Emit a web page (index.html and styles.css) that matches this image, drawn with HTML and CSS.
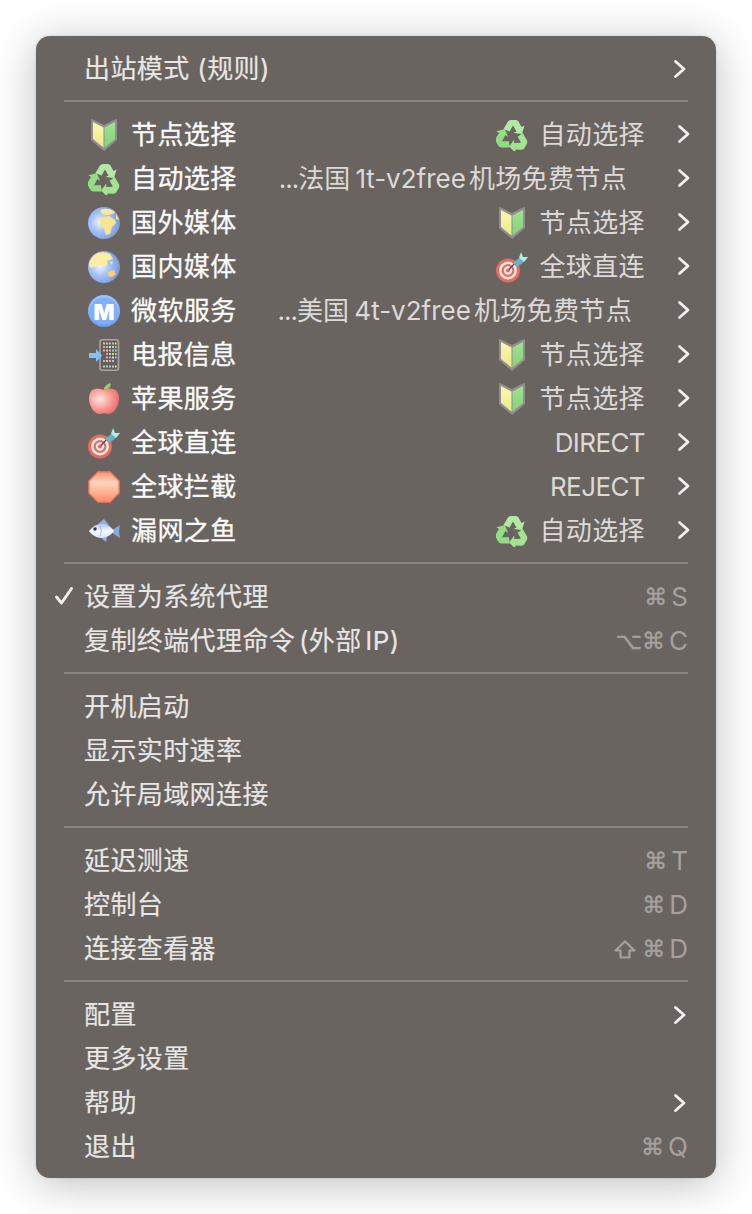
FILE: index.html
```html
<!DOCTYPE html>
<html lang="zh">
<head>
<meta charset="utf-8">
<title>Menu</title>
<link rel="stylesheet" href="styles.css">
</head>
<body>
<svg class="defs" aria-hidden="true">
  <defs>
    <radialGradient id="gGlobe" cx="38%" cy="48%" r="62%"><stop offset="0" stop-color="#f2f6ff"/><stop offset=".45" stop-color="#a9c4fb"/><stop offset=".85" stop-color="#82a6f0"/><stop offset="1" stop-color="#8d93a8"/></radialGradient>
    <linearGradient id="gM" x1="0" y1="0" x2="0" y2="1"><stop offset="0" stop-color="#9cc6fc"/><stop offset="1" stop-color="#6f9ff0"/></linearGradient>
    <radialGradient id="gApple" cx="36%" cy="42%" r="68%"><stop offset="0" stop-color="#ffe6e2"/><stop offset=".5" stop-color="#fba39d"/><stop offset="1" stop-color="#ea6a66"/></radialGradient>
    <linearGradient id="gStop" x1="0" y1="0" x2="0" y2="1"><stop offset="0" stop-color="#ff8f70"/><stop offset=".35" stop-color="#ffd5bc"/><stop offset="1" stop-color="#ff8a68"/></linearGradient>
    <linearGradient id="gFish" x1="0" y1="0" x2="0" y2="1"><stop offset="0" stop-color="#a9c6ef"/><stop offset=".5" stop-color="#f6faff"/><stop offset="1" stop-color="#d9e7fa"/></linearGradient>
    <linearGradient id="gShieldL" x1="0" y1="0" x2="0" y2="1"><stop offset="0" stop-color="#fbf7ae"/><stop offset="1" stop-color="#efe88c"/></linearGradient>
    <linearGradient id="gShieldR" x1="0" y1="0" x2="0" y2="1"><stop offset="0" stop-color="#9fe28f"/><stop offset="1" stop-color="#86d27a"/></linearGradient>
    <path id="rArrow" d="M7.500 10 L12 2.500 Q13 1 15 1 H20 Q21.500 1 22.500 2.500 L25.500 8 L28.500 6.500 L26 15 L17.500 14 L20.500 12.500 L17 6.500 L13.500 12.500Z"/>
    <symbol id="i-shield" viewBox="0 0 32 32">
      <path d="M4 0 L16 6 L28 0 Q29 0 29 2 V21 L16 32 L3 21 V2 Q3 0 4 0Z" fill="#938e90"/>
      <path d="M5 3 L15.500 8.500 V28.500 L5 20Z" fill="url(#gShieldL)"/>
      <path d="M27 3 L16.500 8.500 V28.500 L27 20Z" fill="url(#gShieldR)"/>
    </symbol>
    <symbol id="i-recycle" viewBox="0 0 32 32">
      <use href="#rArrow" fill="#b4e8a6"/>
      <use href="#rArrow" fill="#a2e392" transform="rotate(120 16 17.500)"/>
      <use href="#rArrow" fill="#92dd83" transform="rotate(240 16 17.500)"/>
    </symbol>
    <symbol id="i-globe1" viewBox="0 0 32 32">
      <circle cx="16" cy="16" r="16" fill="url(#gGlobe)"/>
      <path d="M12 3 Q19 0 26 4 L27 6 L21 8 L17 8 L14 7Z" fill="#f9e994"/>
      <path d="M12 11 L21 9 L27 13 L28 16 L24 20 L22 27 L18 28 L16 21 L12 18Z" fill="#f7e58f"/>
      <path d="M28 7 L31 13 L28 12Z" fill="#f7e58f"/>
    </symbol>
    <symbol id="i-globe2" viewBox="0 0 32 32">
      <circle cx="16" cy="16" r="16" fill="url(#gGlobe)"/>
      <path d="M1 13 Q3 5 10 2 Q17 0 22 3 L25 8 L19 10 L19 14 L15 16 L12 13 L9 15 L5 16 L2 17Z" fill="#fbeea0"/>
      <path d="M20 21 L26 19 L28 23 L24 26 L20 25Z" fill="#f5cf72"/>
      <path d="M22 11 L25 10 L24 14Z" fill="#f7e58f"/>
    </symbol>
    <symbol id="i-m" viewBox="0 0 32 32">
      <circle cx="16" cy="16" r="16" fill="url(#gM)"/>
      <circle cx="16" cy="16" r="13.500" fill="#7fb0f8"/>
      <text class="m-letter" x="16" y="24.500" text-anchor="middle">M</text>
    </symbol>
    <symbol id="i-phone" viewBox="0 0 32 32">
      <rect x="12" y=".8" width="18.500" height="30.400" rx="2.500" fill="#625e5d" stroke="#a8a4a2" stroke-width="1.600"/>
      <g fill="#c9d8a8"><rect x="15" y="3.500" width="2" height="2"/><rect x="18" y="3.500" width="2" height="2" fill="#f4c86a"/><rect x="21" y="3.500" width="2" height="2" fill="#9cc8f5"/><rect x="24" y="3.500" width="2" height="2" fill="#e9a6c9"/><rect x="27" y="3.500" width="1.600" height="2" fill="#f4e07a"/></g>
      <g fill="#f4a0a0"><rect x="15" y="7" width="2" height="2"/><rect x="18" y="7" width="2" height="2" fill="#9cc8f5"/><rect x="21" y="7" width="2" height="2" fill="#f4e07a"/><rect x="24" y="7" width="2" height="2" fill="#a6e297"/><rect x="27" y="7" width="1.600" height="2" fill="#f4a0a0"/></g>
      <g fill="#e9a6e0"><rect x="15" y="10.500" width="2" height="2"/><rect x="18" y="10.500" width="2" height="2" fill="#f4c86a"/><rect x="21" y="10.500" width="2" height="2" fill="#f4a0a0"/><rect x="24" y="10.500" width="2" height="2" fill="#9cc8f5"/><rect x="27" y="10.500" width="1.600" height="2" fill="#a6e297"/></g>
      <g fill="#9cc8f5"><rect x="18" y="14" width="2" height="2" fill="#f78fd0"/><rect x="21" y="14" width="2" height="2" fill="#a6e297"/><rect x="24" y="14" width="2" height="2" fill="#f4c86a"/><rect x="27" y="14" width="1.600" height="2"/></g>
      <g fill="#f4c86a"><rect x="18" y="17.500" width="2" height="2" fill="#f4a0a0"/><rect x="21" y="17.500" width="2" height="2" fill="#c9a6f0"/><rect x="24" y="17.500" width="2" height="2" fill="#f4e07a"/><rect x="27" y="17.500" width="1.600" height="2" fill="#e9a6c9"/></g>
      <g fill="#c9a6f0"><rect x="15" y="21" width="2" height="2"/><rect x="18" y="21" width="2" height="2" fill="#a6e297"/><rect x="21" y="21" width="2" height="2" fill="#f4a0a0"/><rect x="24" y="21" width="2" height="2" fill="#9cc8f5"/></g>
      <g fill="#a6e297"><rect x="15" y="26.500" width="2" height="2"/><rect x="18" y="26.500" width="2" height="2"/><rect x="21" y="26.500" width="2" height="2" fill="#9cc8f5"/><rect x="24" y="26.500" width="2" height="2"/><rect x="27" y="26.500" width="1.600" height="2" fill="#e8e4c0"/></g>
      <path d="M1 14 H8 V10 L14 16.500 L8 23 V19 H1Z" fill="#82c3f7"/>
    </symbol>
    <symbol id="i-apple" viewBox="0 0 32 32">
      <path d="M15.500 7 Q14 4 11 2.500" fill="none" stroke="#8a5a40" stroke-width="1.300"/>
      <path d="M15.500 7 Q17 1.500 22.500 0 Q23.500 6 15.500 7Z" fill="#9ad45e"/>
      <path d="M16 7 Q24 3.500 29 8 Q33 15 29 24 Q25 31.500 20 31 Q16 29.500 12 31 Q7 31.500 3 24 Q-1 15 3 8 Q8 3.500 16 7Z" fill="url(#gApple)"/>
    </symbol>
    <symbol id="i-target" viewBox="0 0 32 32">
      <circle cx="12" cy="19.500" r="12" fill="#ea6a5e"/>
      <circle cx="12" cy="19.500" r="9" fill="#f6ece7"/>
      <circle cx="12" cy="19.500" r="6.500" fill="#ea6a5e"/>
      <circle cx="12" cy="19.500" r="4.200" fill="#f6ece7"/>
      <circle cx="12" cy="19.500" r="2.100" fill="#ea6a5e"/>
      <path d="M13 18.500 L20 11" stroke="#3f5a66" stroke-width="1.500"/>
      <path d="M17 12 L23 7 L28 11 L21 16Z" fill="#69b2c6"/>
      <path d="M23 7 L25 1 L27 6 L32 6 L28 11Z" fill="#b0ecee"/>
    </symbol>
    <symbol id="i-stop" viewBox="0 0 32 32">
      <path d="M10 1 H22 L31 10 V22 L22 31 H10 L1 22 V10Z" fill="url(#gStop)" stroke="#f57d62" stroke-width="1.400" stroke-linejoin="round"/>
    </symbol>
    <symbol id="i-fish" viewBox="0 0 32 32">
      <path d="M10 9 L16 4 L21 10Z" fill="#8db0e0"/>
      <path d="M12 22 L18 27 L19 21Z" fill="#8db0e0"/>
      <path d="M24 15 L32 10 L31 16 L32 23 L24 18Z" fill="#86a8d8"/>
      <path d="M1 16 Q8 7 17 9 Q23 11 26 16 Q21 23 13 23 Q5 22 1 16Z" fill="url(#gFish)"/>
      <circle cx="7" cy="14" r="1.700" fill="#2c3a52"/>
      <path d="M12 11 Q15 16 12 21" fill="none" stroke="#9fbbe0" stroke-width="1"/>
    </symbol>
    <symbol id="i-chev" viewBox="0 0 14 20">
      <path d="M2.500 2.500 L11 10 L2.500 17.500" fill="none" stroke="currentColor" stroke-width="2.800" stroke-linecap="round" stroke-linejoin="round"/>
    </symbol>
  </defs>
</svg>

<div class="menu">
  <div class="row"><span class="label">出站模式 (规则)</span><svg class="chev"><use href="#i-chev"/></svg></div>
  <hr class="sep sep-a">

  <div class="row proxy"><svg class="ico"><use href="#i-shield"/></svg><span class="name">节点选择</span><span class="value"><svg class="ico"><use href="#i-recycle"/></svg><span class="vtext">自动选择</span></span><svg class="chev"><use href="#i-chev"/></svg></div>
  <div class="row proxy"><svg class="ico"><use href="#i-recycle"/></svg><span class="name">自动选择</span><span class="value long a"><span class="dots">...</span>法国 1t-v2free<span class="zh">机场免费节点</span></span><svg class="chev"><use href="#i-chev"/></svg></div>
  <div class="row proxy"><svg class="ico"><use href="#i-globe1"/></svg><span class="name">国外媒体</span><span class="value"><svg class="ico"><use href="#i-shield"/></svg><span class="vtext">节点选择</span></span><svg class="chev"><use href="#i-chev"/></svg></div>
  <div class="row proxy"><svg class="ico"><use href="#i-globe2"/></svg><span class="name">国内媒体</span><span class="value"><svg class="ico"><use href="#i-target"/></svg><span class="vtext">全球直连</span></span><svg class="chev"><use href="#i-chev"/></svg></div>
  <div class="row proxy"><svg class="ico"><use href="#i-m"/></svg><span class="name">微软服务</span><span class="value long b"><span class="dots">...</span>美国 4t-v2free<span class="zh">机场免费节点</span></span><svg class="chev"><use href="#i-chev"/></svg></div>
  <div class="row proxy"><svg class="ico"><use href="#i-phone"/></svg><span class="name">电报信息</span><span class="value"><svg class="ico"><use href="#i-shield"/></svg><span class="vtext">节点选择</span></span><svg class="chev"><use href="#i-chev"/></svg></div>
  <div class="row proxy"><svg class="ico"><use href="#i-apple"/></svg><span class="name">苹果服务</span><span class="value"><svg class="ico"><use href="#i-shield"/></svg><span class="vtext">节点选择</span></span><svg class="chev"><use href="#i-chev"/></svg></div>
  <div class="row proxy"><svg class="ico"><use href="#i-target"/></svg><span class="name">全球直连</span><span class="value"><span class="vtext latin">DIRECT</span></span><svg class="chev"><use href="#i-chev"/></svg></div>
  <div class="row proxy"><svg class="ico"><use href="#i-stop"/></svg><span class="name">全球拦截</span><span class="value"><span class="vtext latin">REJECT</span></span><svg class="chev"><use href="#i-chev"/></svg></div>
  <div class="row proxy"><svg class="ico"><use href="#i-fish"/></svg><span class="name">漏网之鱼</span><span class="value"><svg class="ico"><use href="#i-recycle"/></svg><span class="vtext">自动选择</span></span><svg class="chev"><use href="#i-chev"/></svg></div>
  <hr class="sep sep-b">

  <div class="row checked"><svg class="check" viewBox="0 0 20 20"><path d="M2.500 11 L7.500 17 L17.500 2.500" fill="none" stroke="currentColor" stroke-width="2.900" stroke-linecap="round" stroke-linejoin="round"/></svg><span class="label">设置为系统代理</span><span class="keys"><span class="sym">⌘</span><span class="k">S</span></span></div>
  <div class="row"><span class="label tight">复制终端代理命令 (外部 IP)</span><span class="keys"><span class="sym opt">⌥</span><span class="sym">⌘</span><span class="k">C</span></span></div>
  <hr class="sep">

  <div class="row"><span class="label">开机启动</span></div>
  <div class="row"><span class="label">显示实时速率</span></div>
  <div class="row"><span class="label">允许局域网连接</span></div>
  <hr class="sep">

  <div class="row"><span class="label">延迟测速</span><span class="keys"><span class="sym">⌘</span><span class="k">T</span></span></div>
  <div class="row"><span class="label">控制台</span><span class="keys"><span class="sym">⌘</span><span class="k">D</span></span></div>
  <div class="row"><span class="label">连接查看器</span><span class="keys"><svg class="shift" viewBox="0 0 22 19"><path d="M11 1.500 L20.500 10.500 H15.500 V17.500 H6.500 V10.500 H1.500Z" fill="none" stroke="currentColor" stroke-width="2.200" stroke-linejoin="round"/></svg><span class="sym">⌘</span><span class="k">D</span></span></div>
  <hr class="sep">

  <div class="row"><span class="label">配置</span><svg class="chev"><use href="#i-chev"/></svg></div>
  <div class="row"><span class="label">更多设置</span></div>
  <div class="row"><span class="label">帮助</span><svg class="chev"><use href="#i-chev"/></svg></div>
  <div class="row"><span class="label">退出</span><span class="keys"><span class="sym">⌘</span><span class="k">Q</span></span></div>
</div>
</body>
</html>
```
FILE: styles.css
```css
* { box-sizing: border-box; }
html, body { margin: 0; background: #fff; }
body {
  width: 752px;
  height: 1214px;
  padding: 36px;
  overflow: hidden;
  font-family: "Inter", "Noto Sans CJK SC", sans-serif;
  font-size: 26px;
}
.defs { display: block; width: 0; height: 0; overflow: hidden; }
.menu {
  width: 680px;
  height: 1142px;
  padding: 11px 0 0;
  background: #6a6461;
  border-radius: 14px;
  box-shadow: 0 6px 44px rgba(0, 0, 0, .26), 0 0 3px rgba(0, 0, 0, .12);
  color: #e8e6e4;
}
.row {
  display: flex;
  align-items: center;
  height: 44px;
  padding: 0 28px 0 48px;
  line-height: 44px;
  white-space: nowrap;
}
.label {
  flex: none;
  letter-spacing: .4px;
  -webkit-text-stroke: .15px #e8e6e4;
}
.tight { word-spacing: -4px; }
.sep {
  height: 2px;
  margin: 9px 28px 11px;
  border: 0;
  background: #8b8683;
}
.chev {
  flex: none;
  width: 14px;
  height: 20px;
  margin-left: auto;
  margin-right: 1px;
  color: #f2f1f0;
}
.proxy { padding-left: 52px; }
.proxy .chev { margin: 0 -3px 2px 0; }
.ico { flex: none; width: 32px; height: 32px; }
.name {
  flex: none;
  margin-left: 11px;
  letter-spacing: .4px;
  color: #fbfafa;
  -webkit-text-stroke: .3px #fbfafa;
}
.value {
  flex: 1;
  display: flex;
  align-items: center;
  justify-content: flex-end;
  margin-right: 32px;
  letter-spacing: .4px;
  color: #dcd9d7;
}
.vtext { margin-left: 11px; }
.latin { letter-spacing: -.6px; }
.long { letter-spacing: 0; word-spacing: -2px; }
.dots { letter-spacing: -1px; }
.long.a { margin-right: 50px; }
.long.b { margin-right: 45px; }
.zh { margin-left: 3px; letter-spacing: .35px; }
.checked { position: relative; }
.check {
  position: absolute;
  left: 18px;
  top: 11px;
  width: 20px;
  height: 20px;
  color: #f2f1f0;
}
.keys {
  margin-left: auto;
  display: flex;
  align-items: center;
  color: #a5a19e;
}
.sym {
  margin-right: 2px;
  font-family: "DejaVu Sans", sans-serif;
  font-size: 23px;
  -webkit-text-stroke: .4px #a5a19e;
}
.sym.opt { margin-right: 0; }
.shift { width: 22px; height: 19px; margin-right: 6px; }
.k { margin-left: 2px; }
.m-letter {
  font-family: "Inter", sans-serif;
  font-weight: 900;
  font-size: 22px;
  fill: #fff;
}
```
